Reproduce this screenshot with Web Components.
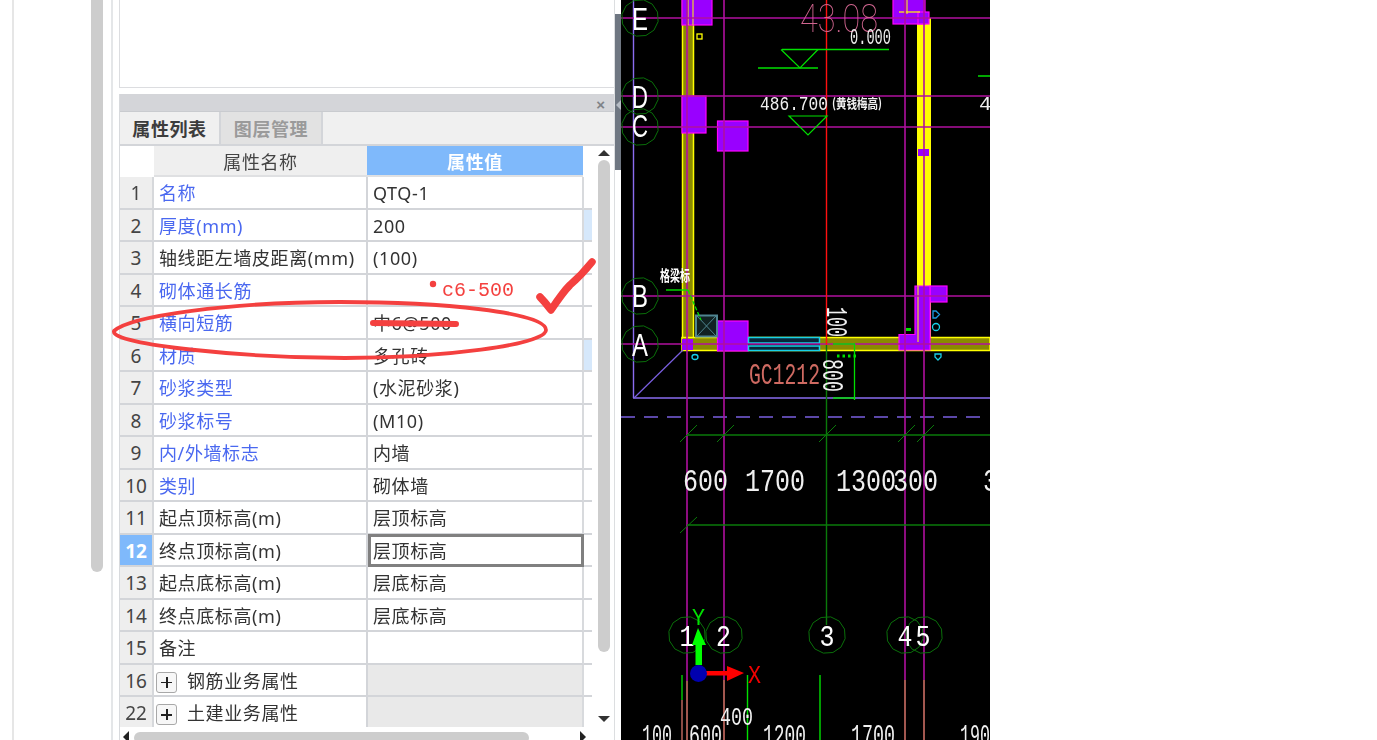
<!DOCTYPE html>
<html lang="zh"><head><meta charset="utf-8"><title>属性列表</title>
<style>
html,body{margin:0;height:100%;background:#fff;overflow:hidden}
body{font-family:"Noto Sans","Noto Sans CJK SC",sans-serif}
</style></head><body>
<app-shell>
  <prop-panel slot="panel">
    <prop-row n="1" link>名称<span slot="value">QTQ-1</span></prop-row>
    <prop-row n="2" link tint>厚度(mm)<span slot="value">200</span></prop-row>
    <prop-row n="3">轴线距左墙皮距离(mm)<span slot="value">(100)</span></prop-row>
    <prop-row n="4" link>砌体通长筋</prop-row>
    <prop-row n="5" link>横向短筋<span slot="value">中6@500</span></prop-row>
    <prop-row n="6" link tint>材质<span slot="value">多孔砖</span></prop-row>
    <prop-row n="7" link>砂浆类型<span slot="value">(水泥砂浆)</span></prop-row>
    <prop-row n="8" link>砂浆标号<span slot="value">(M10)</span></prop-row>
    <prop-row n="9" link>内/外墙标志<span slot="value">内墙</span></prop-row>
    <prop-row n="10" link>类别<span slot="value">砌体墙</span></prop-row>
    <prop-row n="11">起点顶标高(m)<span slot="value">层顶标高</span></prop-row>
    <prop-row n="12" active>终点顶标高(m)<span slot="value">层顶标高</span></prop-row>
    <prop-row n="13">起点底标高(m)<span slot="value">层底标高</span></prop-row>
    <prop-row n="14">终点底标高(m)<span slot="value">层底标高</span></prop-row>
    <prop-row n="15">备注</prop-row>
    <prop-row n="16" group>钢筋业务属性</prop-row>
    <prop-row n="22" group>土建业务属性</prop-row>
  </prop-panel>
  <cad-view slot="cad"></cad-view>
  <mark-overlay slot="overlay"></mark-overlay>
</app-shell>
<script>
function el(name, html, init){
  customElements.define(name, class extends HTMLElement{
    constructor(){super();this.attachShadow({mode:'open'}).innerHTML=html;}
    connectedCallback(){ if(init) init.call(this,this.shadowRoot); }
  });
}
el('app-shell',`<style>
:host{display:block;position:relative;width:1377px;height:740px;overflow:hidden;background:#fff}
.row{display:flex;height:740px}
.gut{width:12px;flex:none}
.outer{width:77px;flex:none;border-left:2px solid #e6e6e6}
.bar{width:12px;flex:none;height:572px;background:#cdcdcd;border-radius:0 0 6px 6px}
.gap{width:8px;flex:none}
.col{flex:none;border-left:2px solid #e4e6e8;padding-left:6px;box-sizing:border-box;width:503px;display:flex;flex-direction:column}
.top{height:88px;flex:none;box-sizing:border-box;border:1.5px solid #dcdde0;border-top:0;border-right:0;margin-bottom:6px}
.strip{width:7px;flex:none;position:relative;border-left:1px solid #dcdee0;box-sizing:border-box}
.strip i{display:block;margin-top:14px;height:156px;background:#6f7782;position:relative}
.strip b{position:absolute;left:1px;top:86px;border:5px solid transparent;border-left:0;border-right-color:#b6bcc4}
</style><div class="row"><div class="gut"></div><div class="outer"></div><div class="bar"></div><div class="gap"></div>
<div class="col"><div class="top"></div><slot name="panel"></slot></div>
<div class="strip"><i><b></b></i></div><slot name="cad"></slot></div><slot name="overlay"></slot>`);

el('prop-panel',`<style>
:host{display:flex;flex-direction:column;height:646px;width:495px;box-sizing:border-box;border-left:1px solid #d8dadd;font-size:18px;letter-spacing:.6px;color:#333;filter:blur(.35px)}
.title{height:17px;flex:none;background:#d4d5d9;position:relative;display:flex;justify-content:flex-end;border-bottom:1px solid #c9cbcf}
.x{color:#7f8388;font:700 15px/21px "Liberation Sans",sans-serif;padding-right:9px;letter-spacing:0}
.tabs{flex:none;background:#f0f0f0;display:flex;border-bottom:2px solid #d3d5d9;box-sizing:content-box;height:32px}
.tab{width:99px;text-align:center;line-height:34px;font-weight:700;color:#3c3c3c;border-right:2px solid #d3d5d9}
.tab+.tab{width:100px;background:#e2e2e2;color:#9a9a9a;font-weight:700}
.body{flex:1;display:flex;min-height:0}
.tbl{width:472px;flex:none;overflow:hidden;height:581px}
.head{display:grid;grid-template-columns:34px 213px 216px 9px;height:31px;line-height:32px;text-align:center}
.head div:nth-child(2){background:#efefef;border-bottom:2px solid #dfe0e2;color:#444;height:29px}
.head div:nth-child(3){background:#7fb9fb;color:#fff;font-weight:700;height:29px;border-bottom:2px solid #dfe0e2}
.sb{width:22px;flex:none;display:flex;flex-direction:column;align-items:center;padding:4px 0 5px 1px;box-sizing:border-box}
.up,.dn{border:6px solid transparent;border-top:0;border-bottom:6px solid #333;flex:none}
.dn{border-bottom:0;border-top:6px solid #333;margin-top:auto}
.th{width:12px;height:492px;margin-top:4px;background:#cdcdcd;border-radius:6px;flex:none}
.hs{height:13px;flex:none;display:flex;align-items:flex-start;padding:5px 0 0 3px;position:relative;box-sizing:border-box;margin-top:auto}
.l,.r{border:6px solid transparent;border-left:0;border-right:6px solid #222;margin-top:-1px;flex:none}
.r{border:6px solid transparent;border-right:0;border-left:6px solid #222;margin-left:51px}
.hth{width:395px;height:12px;margin-left:5px;background:#cdcdcd;border-radius:6px;flex:none}
</style>
<div class="title"><span class="x">×</span></div>
<div class="tabs"><div class="tab">属性列表</div><div class="tab">图层管理</div></div>
<div class="body"><div class="tbl"><div class="head"><div></div><div>属性名称</div><div>属性值</div><div></div></div><slot></slot></div>
<div class="sb"><div class="up"></div><div class="th"></div><div class="dn"></div></div></div>
<div class="hs"><div class="l"></div><div class="hth"></div><div class="r"></div></div>`);

el('prop-row',`<style>
:host{display:grid;grid-template-columns:34px 214px 216px 8px;grid-template-rows:32.5px;height:32.5px;box-sizing:border-box;line-height:30px;white-space:nowrap}
.n,.k,.v,.e{min-height:0;height:32.5px;padding-top:1px}
.n{background:#eee;border-right:2px solid #d6d8db;border-bottom:2px solid #d3d5d9;text-align:center;color:#444;box-sizing:border-box;letter-spacing:0;font-size:19px}
.k{padding-left:5px;border-bottom:2px solid #d3d5d9;border-right:2px solid #d3d5d9;box-sizing:border-box;overflow:hidden;display:flex;align-items:flex-start}
.v{padding-left:5px;border-bottom:2px solid #d3d5d9;border-right:2px solid #d8dadd;box-sizing:border-box;overflow:hidden}
.e{border-bottom:2px solid #d3d5d9;box-sizing:border-box}
:host([link]) .k{color:#4a68f0}
:host([tint]) .e{background:#d6e8fb}
:host([active]) .n{background:#7fb9fb;color:#fff;font-weight:700}
:host([active]) .v{box-shadow:inset 0 0 0 3px #808080;border:0;margin-top:-1px;height:33.5px;line-height:32px}
:host([group]) .v{background:#e9e9e9}
.p{display:none;width:21px;height:21px;box-sizing:border-box;border:1px solid #a8a8a8;border-radius:3px;margin:6px 10px 0 -3px;position:relative;flex:none;background:#f7f7f7}
.p:before{content:"";position:absolute;left:4px;top:9px;width:11px;height:1.5px;background:#222}
.p:after{content:"";position:absolute;left:9px;top:4px;height:11px;width:1.5px;background:#222}
:host([group]) .p{display:block}
</style><div class="n"></div><div class="k"><span class="p"></span><span><slot></slot></span></div><div class="v"><slot name="value"></slot></div><div class="e"></div>`,
function(r){r.querySelector('.n').textContent=this.getAttribute('n');});

const M='#b0109f',G='#0a7a0a',Y='#ffff00',O='#8a8a00',P='#9900ff',F='#ff00ff',W='#f0f0f0',S='#d8756a',B='#00e000',CY='#18d0e8';
function rect(x,y,w,h){return `<rect x="${x}" y="${y}" width="${w}" height="${h}" fill="${P}" stroke="${F}" stroke-width="1.2"/>`}
function line(a,b,c,d,col,w){return `<line x1="${a}" y1="${b}" x2="${c}" y2="${d}" stroke="${col}" stroke-width="${w||1.6}"/>`}
function oct(cx,cy){let p=[];for(let i=0;i<12;i++){let t=i*Math.PI/6+.2;p.push((cx+18.5*Math.cos(t)).toFixed(1)+','+(cy+18.5*Math.sin(t)).toFixed(1));}return `<polygon points="${p.join(' ')}" fill="none" stroke="#0a700a" stroke-width="1"/>`}
function label(t,x,y,s,col,f,extra){return `<text x="${x}" y="${y}" font-size="${s}" fill="${col||W}" font-family="${f||'Liberation Mono'}" ${extra||''}>${t}</text>`}
function fit(n){return `textLength="${n}" lengthAdjust="spacingAndGlyphs"`}
let s='';
// walls
s+=`<rect x="682.5" y="0" width="11" height="345" fill="${O}" stroke="${Y}" stroke-width="1.5"/>`;
s+=line(688,0,688,345,'#b06a30',1);
s+=`<rect x="917" y="18" width="14" height="327" fill="${Y}"/>`;
s+=`<rect x="682" y="337.5" width="308" height="13" fill="${O}" stroke="${Y}" stroke-width="1.5"/>`;
// purple frame
s+=line(633.5,0,633.5,398,'#8a6cf0',1.4)+line(633,398,990,398,'#8a6cf0',1.4)+line(634,398,683,350,'#7a5fe0',1.2);
s+=`<line x1="621" y1="417" x2="985" y2="417" stroke="#7a5fe0" stroke-width="1.5" stroke-dasharray="14 9"/>`;
// columns
s+=rect(682,-2,30,27)+rect(682,96,24,37)+rect(717.5,121,30.5,30)+rect(893,-2,32,26)+rect(918,12,11,12);
s+=`<rect x="918" y="149" width="11" height="7" fill="${P}"/>`;
s+=line(688,0,688,25,Y,1)+line(693,0,693,25,Y,1)+line(907,0,907,14,Y,1)+line(899,12,920,12,Y,1.2);
s+=`<rect x="697" y="34" width="5" height="5" fill="none" stroke="${Y}" stroke-width="1.3"/>`;
// lower columns
s+=rect(717.5,321,30.5,30)+rect(930,286,17,16);
s+=`<path d="M915 286H930V350H899V334.5H915Z" fill="${P}" stroke="${F}" stroke-width="1.2"/>`;
s+=line(918,286,918,342,Y,1);
s+=`<rect x="682" y="339" width="11" height="11" fill="${P}"/>`;
s+=`<rect x="906" y="328" width="5" height="3" fill="${B}"/>`;
// window
s+=`<rect x="748" y="337" width="72" height="14" fill="#000"/><rect x="748.5" y="337.500" width="71" height="5.500" fill="#06283a" stroke="${CY}" stroke-width="1.5"/><rect x="748.5" y="346" width="71" height="4.500" fill="#06283a" stroke="${CY}" stroke-width="1.5"/>`;
// teal box
s+=`<rect x="696" y="315.5" width="21" height="21" fill="#122" stroke="#4f8490" stroke-width="2"/><path d="M697 316L716 336M716 316L697 336" stroke="#4f8490" stroke-width="1" fill="none"/>`;
// grids
[18,96,127,296,344].forEach(y=>s+=line(621,y,990,y,M));
s+=line(826.5,0,826.5,345,'#ff1010',1.4)+line(826.5,345,826.5,625,G,1.4);
[[687,681],[724,680],[905,680],[924,680]].forEach(a=>{s+=line(a[0],0,a[0],a[1],M);s+=line(a[0],a[1],a[0],740,S,1.5);});
s+=line(682,675,682,700,B,1.3)+line(682,700,682,740,S,1.3)+line(747.5,675,747.5,740,B,1.4)+line(820,675,820,740,B,1.4);
// dim lines
[435,525].forEach(y=>{s+=line(687,y,990,y,G,1.3);});
[687,724,826,905,924].forEach(x=>s+=line(x-7,442,x+10,425,G,1));
s+=line(680,533,697,517,G,1);
// green annotations
s+=line(782,49.5,889,49.5,B,1.3)+line(758,68,818,68,B,1.3)+`<path d="M781 49.5L800 68L818 49.5" fill="none" stroke="${B}" stroke-width="1.2"/>`;
s+=`<path d="M789 116H827L808 135Z" fill="none" stroke="${B}" stroke-width="1.2"/>`+line(978,76,990,76,B,1.5);
s+=line(666,290,688,290,B,1.4)+`<path d="M688 290L701 320" fill="none" stroke="${B}" stroke-width="1.3" stroke-dasharray="4 2"/>`;
s+=`<path d="M833 344H854.500V400M833 398H855" fill="none" stroke="${B}" stroke-width="1.3"/>`;
s+=`<path d="M837 356H858" stroke="${B}" stroke-width="3" stroke-dasharray="2.5 3" fill="none"/>`;
// small markers
s+=`<g fill="none" stroke-width="1.3"><ellipse cx="695" cy="357" rx="3" ry="2.500" stroke="${CY}"/><circle cx="936" cy="327" r="3.500" stroke="${CY}"/><path d="M933 311h3l3.500 3.500-3.500 3.500h-3z" stroke="#1a9ae0"/><path d="M935 354h6v3l-3 3-3-3z" stroke="${CY}"/></g>`;
// axis circles
[[640,18],[640,96],[640,127],[640,296],[640,344],[687,635],[724,635],[827,635],[905,635],[924,635]].forEach(a=>s+=oct(a[0],a[1]));
// axis labels
[['E',30],['D',108],['C',137],['B',307],['A',356]].forEach(a=>s+=label(a[0],632,a[1],31,'#fff','Liberation Sans',fit(16)));
[['1',687,646,30],['2',723.5,646,30],['3',827,646,30],['4',905,646,30],['5',923,646,30]].forEach(a=>s+=label(a[0],a[1],a[2],a[3],'#fff','Liberation Mono',`text-anchor="middle" ${fit(15)}`));
// dim texts
s+=label('43.08',800,32,38,'#d0658f','Roboto',`font-weight="100" ${fit(78)}`);
s+=label('0.000',850,44,22,W,'Liberation Mono',fit(41));
s+=label('486.700',760,110,21,W,'Liberation Mono',fit(68));
s+=label('(黄钱梅高)',832,108,13,W,'Noto Sans CJK SC',`font-weight="700" ${fit(50)}`);
s+=label('4',979,110,21,W);
s+=label('格梁标',660,281,15,'#fff','Noto Sans CJK SC',`font-weight="700" ${fit(30)}`);
s+=label('GC1212',749,384,29,'#cf6a62','Liberation Mono',fit(71));
s+=label('100',827,307,29,W,'Liberation Mono',`transform="rotate(90 827 307)" ${fit(30)}`);
s+=label('800',823,359,29,W,'Liberation Mono',`transform="rotate(90 823 359)" ${fit(33)}`);
[['600',683,45],['1700',745,60],['1300',836,60],['300',893,45],['3',983,15]].forEach(a=>s+=label(a[0],a[1],491,32,W,'Liberation Mono',fit(a[2])));
[['100',642,30],['600',689,33],['1200',763,43],['1700',851,44],['190',960,30]].forEach(a=>s+=label(a[0],a[1],745,30,W,'Liberation Mono',fit(a[2])));
s+=label('400',720,725,26,W,'Liberation Mono',fit(33));
// UCS
s+=`<path d="M695.500 665V645H692L698 628L706 645H702V665Z" fill="#00ff00"/>`;
s+=`<path d="M706 671H727V666L744 673L727 681V675.500H706Z" fill="#ff0000"/>`;
s+=`<circle cx="698.500" cy="673.500" r="8.500" fill="#0000b0"/>`;
s+=label('Y',692,625,23,'#00e000','Liberation Mono',fit(13));
s+=label('X',748,683,26,'#f00000','Liberation Mono',fit(13));
el('cad-view',`<style>:host{display:block;width:369px;height:740px;flex:none;background:#000;overflow:hidden;filter:blur(.2px)}svg{display:block}</style>
<svg width="369" height="740" viewBox="621 0 369 740" xmlns="http://www.w3.org/2000/svg">${s}</svg>`);

el('mark-overlay',`<style>
:host{position:absolute;left:0;top:0;width:1377px;height:740px;display:block;pointer-events:none}
svg{position:absolute;left:0;top:0}
span{position:absolute;left:442px;top:278px;font:20px/26px "Liberation Mono",monospace;color:#f4413f}
</style><svg width="1377" height="740" xmlns="http://www.w3.org/2000/svg" fill="none" stroke="#f4403f" stroke-linecap="round" stroke-linejoin="round">
<path d="M114 331C130 316 230 302 340 302C440 302 546 312 546 330C546 345 440 358 345 358C250 358 110 345 114 331Z" stroke-width="3.8"/>
<path d="M373 323L456 324" stroke-width="6"/>
<circle cx="433" cy="284" r="3.200" fill="#f4403f" stroke="none"/>
<path d="M540 297C544 301 548 306 551 310C557 301 563 292 570 285C577 279 584 272 592 262" stroke-width="7.500"/>
</svg><span>c6-500</span>`);
</script>
</body></html>
